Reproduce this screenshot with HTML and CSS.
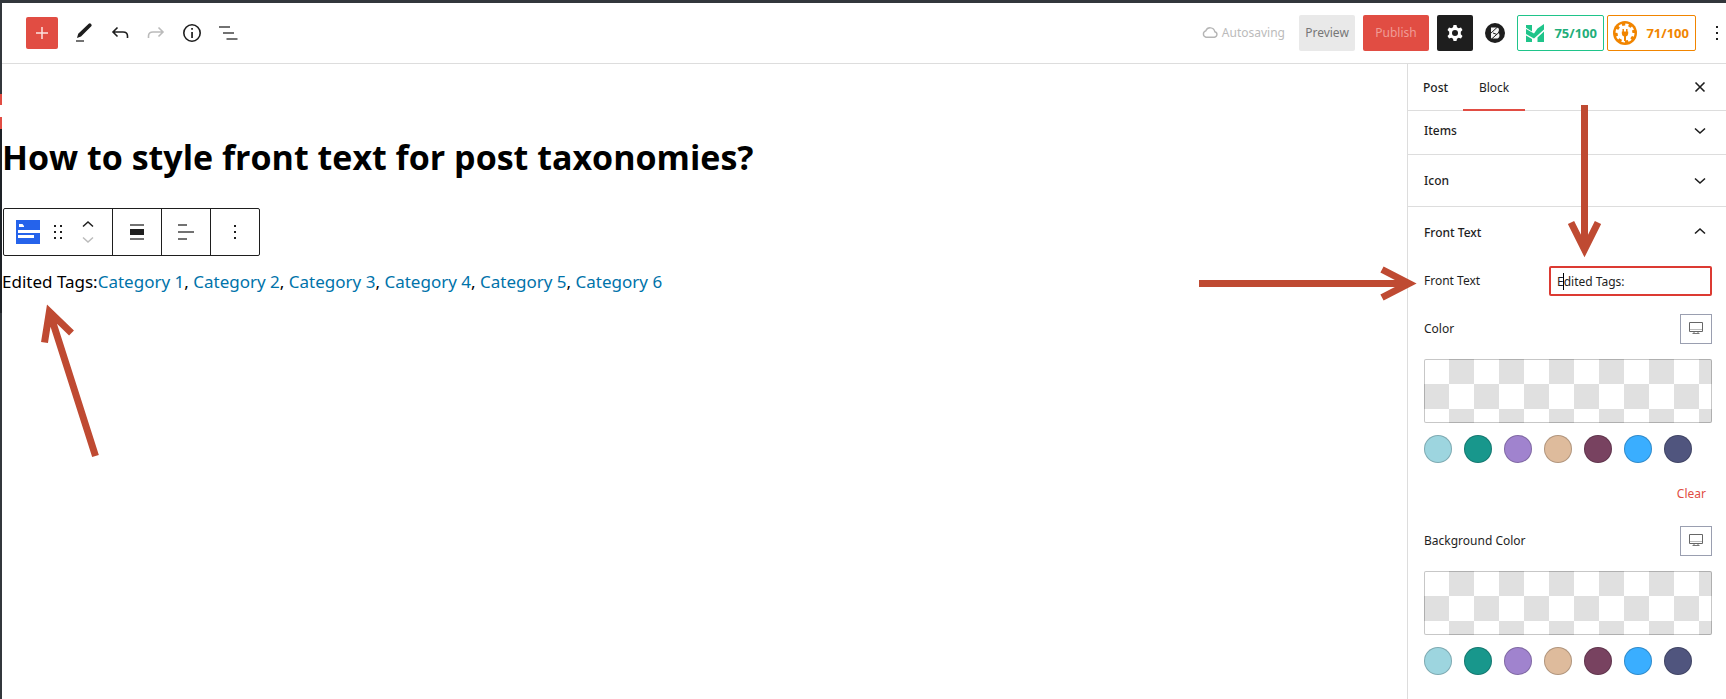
FILE: index.html
```html
<!DOCTYPE html>
<html lang="en">
<head>
<meta charset="utf-8">
<title>Edit Post</title>
<link rel="stylesheet" href="styles.css">
</head>
<body>
<div class="admin-rail"><span class="rail-marker"></span><span class="rail-dark"></span></div>
<div class="app">
  <header class="topbar">
    <div class="tools">
      <button class="add-btn" aria-label="Add block"><svg width="24" height="24" viewBox="0 0 24 24"><path d="M12 6v12M6 12h12" stroke="#fbe3e1" stroke-width="1.5"/></svg></button>
      <button class="icon-btn" aria-label="Tools"><svg width="24" height="24" viewBox="0 0 24 24"><path d="M5 17l1.200-4.300L16.700 2.700q1.200-1 2.400.2t.2 2.400L9 15.500z" fill="#1e1e1e"/><path d="M4 20h8" stroke="#444" stroke-width="1.500"/></svg></button>
      <button class="icon-btn" aria-label="Undo"><svg width="24" height="24" viewBox="0 0 24 24" fill="none" stroke="#1e1e1e" stroke-width="1.600"><path d="M9.500 6.500L5 11 9.500 15.500M5.500 11H15q4.500 0 4.500 4v2"/></svg></button>
      <button class="icon-btn" aria-label="Redo" disabled><svg width="24" height="24" viewBox="0 0 24 24" fill="none" stroke="#bbb" stroke-width="1.600"><path d="M14.500 6.500L19 11l-4.500 4.500M18.500 11H9q-4.500 0-4.500 4v2"/></svg></button>
      <button class="icon-btn" aria-label="Details"><svg width="24" height="24" viewBox="0 0 24 24"><circle cx="12" cy="12" r="8.200" fill="none" stroke="#1e1e1e" stroke-width="1.600"/><path d="M11.200 7h1.700v1.800h-1.700zM11.200 11h1.700v6h-1.700z" fill="#1e1e1e"/></svg></button>
      <button class="icon-btn" aria-label="List view"><svg width="24" height="24" viewBox="0 0 24 24"><path d="M3 6h11M7 12h11M10.500 18h11" stroke="#444" stroke-width="1.600"/></svg></button>
    </div>
    <div class="actions">
      <span class="saving"><svg width="16" height="24" viewBox="0 0 16 24"><path d="M4 16.200h8.500a2.800 2.800 0 0 0 .3-5.500 4.700 4.700 0 0 0-9-.9A3.300 3.300 0 0 0 4 16.200z" fill="none" stroke="#b5b5b5" stroke-width="1.400"/></svg>Autosaving</span>
      <button class="btn preview">Preview</button>
      <button class="btn publish">Publish</button>
      <button class="gear" aria-label="Settings"><svg width="24" height="24" viewBox="0 0 24 24"><path d="M10.500 4h3l.5 2.300 1.700 1 2.300-.8 1.500 2.600-1.700 1.600v2.600l1.700 1.600-1.500 2.600-2.300-.8-1.700 1-.5 2.300h-3L10 17.700l-1.700-1-2.300.8-1.500-2.600 1.700-1.600v-2.600L4.500 9.100 6 6.500l2.300.8 1.700-1z" fill="#fff"/><circle cx="12" cy="12" r="3" fill="#1e1e1e"/></svg></button>
      <button class="icon-btn blocks" aria-label="Blocks"><svg width="20" height="20" viewBox="0 0 20 20"><circle cx="10" cy="10" r="10" fill="#1e1e1e"/><path d="M6 4.500h5.500q2.500 0 2.500 2.300 0 1.700-1.200 2.700 1.700.8 1.700 2.900 0 3.100-3.500 3.100H6z" fill="#f4f4f4"/><path d="M5 11L12.500 4M6 16.500L15 8.500M8 10l4 1.500" stroke="#1e1e1e" stroke-width="1"/></svg></button>
      <div class="scores">
        <button class="score green"><svg width="24" height="24" viewBox="0 0 24 24" fill="#1fc48a"><path d="M3 4h6v6.500L3 6.800zM14.500 7.500L21 3v5.500l-10 9L3 13V8l8 4.500z"/><path d="M3 14.500l6 3.500v3H3zM14.500 16.500L21 10.500V21h-6.500z"/></svg><span>75/100</span></button>
        <button class="score orange"><svg width="24" height="24" viewBox="0 0 24 24"><circle cx="12" cy="12" r="12" fill="#f18500"/><circle cx="12" cy="12" r="7.500" fill="#fff"/><circle cx="12" cy="12" r="8" fill="none" stroke="#fff" stroke-width="3" stroke-dasharray="3.200 3.083"/><path d="M10.200 8v3M13.800 8v3" stroke="#f18500" stroke-width="1.500"/><path d="M8.800 10.500h6.400v2q0 2.400-2.200 3V20h-2v-4.500q-2.200-.6-2.200-3z" fill="#f18500"/></svg><span>71/100</span></button>
      </div>
      <button class="more" aria-label="Options"><svg width="4" height="24" viewBox="0 0 4 24" fill="#1e1e1e"><path d="M1 5h2v2H1zM1 11h2v2H1zM1 17h2v2H1z"/></svg></button>
    </div>
  </header>
  <div class="body">
    <main class="editor">
      <h1>How to style front text for post taxonomies?</h1>
      <div class="toolbar" role="toolbar" aria-label="Block tools">
        <div class="group first">
          <button aria-label="Post taxonomies"><svg width="24" height="24" viewBox="0 0 24 24"><path d="M0 0h24v24H0z" fill="#2563eb"/><path d="M2 10h22v3H2zM2 15h16v3H2zM3 4h3.500L8 6v1H3z" fill="#fff"/></svg></button>
          <button aria-label="Drag"><svg width="24" height="24" viewBox="0 0 24 24" fill="#1e1e1e"><path d="M8 5h2v2H8zM14 5h2v2h-2zM8 11h2v2H8zM14 11h2v2h-2zM8 17h2v2H8zM14 17h2v2h-2z"/></svg></button>
          <div class="movers">
            <button aria-label="Move up"><svg width="12" height="8" viewBox="0 0 12 8"><path d="M1 6.500l5-4.500 5 4.500" fill="none" stroke="#1e1e1e" stroke-width="1.500"/></svg></button>
            <button aria-label="Move down" disabled><svg width="12" height="8" viewBox="0 0 12 8"><path d="M1 1.500L6 6l5-4.500" fill="none" stroke="#bbb" stroke-width="1.500"/></svg></button>
          </div>
        </div>
        <div class="group"><button aria-label="Align"><svg width="24" height="24" viewBox="0 0 24 24"><path d="M5 5h14M5 19h14" stroke="#444" stroke-width="1.600"/><path d="M5 9h14v6H5z" fill="#1e1e1e"/></svg></button></div>
        <div class="group"><button aria-label="Align text"><svg width="24" height="24" viewBox="0 0 24 24"><path d="M4 5h9M4 12h16M4 19h9" stroke="#444" stroke-width="1.600"/></svg></button></div>
        <div class="group"><button aria-label="Options"><svg width="24" height="24" viewBox="0 0 24 24" fill="#1e1e1e"><path d="M11 5h2v2h-2zM11 11h2v2h-2zM11 17h2v2h-2z"/></svg></button></div>
      </div>
      <p class="terms">Edited Tags:<a href="#">Category 1</a>, <a href="#">Category 2</a>, <a href="#">Category 3</a>, <a href="#">Category 4</a>, <a href="#">Category 5</a>, <a href="#">Category 6</a></p>
      <svg class="arrow arrow-terms" width="70" height="160" viewBox="0 0 70 160"><path d="M9.400 9.600L55.500 154M4.500 40.500l4.900-30.900L31.500 31"/></svg>
    </main>
    <aside class="sidebar">
      <div class="tabs">
        <button class="tab strong">Post</button>
        <button class="tab active">Block</button>
        <button class="close" aria-label="Close settings"><svg width="12" height="12" viewBox="0 0 12 12"><path d="M1.500 1.500l9 9M10.500 1.500l-9 9" stroke="#1e1e1e" stroke-width="1.600"/></svg></button>
      </div>
      <button class="panel-title short">Items<svg width="12" height="8" viewBox="0 0 12 8"><path d="M1 1.500L6 6l5-4.500"/></svg></button>
      <button class="panel-title">Icon<svg width="12" height="8" viewBox="0 0 12 8"><path d="M1 1.500L6 6l5-4.500"/></svg></button>
      <section class="panel">
        <button class="panel-title open">Front Text<svg width="12" height="12" viewBox="0 0 12 12"><path d="M1 6.500L6 2l5 4.500"/></svg></button>
        <div class="row">
          <label for="front-text">Front Text</label>
          <div class="field"><input id="front-text" type="text" value="Edited Tags:"><span class="caret"></span></div>
        </div>
        <div class="row color-row">
          <span>Color</span>
          <button class="device" aria-label="Desktop"><svg width="14" height="14" viewBox="0 0 14 14"><path d="M.5 1.500h13v9H.5z" fill="#fff" stroke="#666"/><path d="M1 8.500h12" stroke="#bbb"/><path d="M5 11v2M9 11v2M3.500 12.500h7" stroke="#777"/></svg></button>
        </div>
        <div class="checker"></div>
        <div class="swatches"><button class="c1" aria-label="Aqua"></button><button class="c2" aria-label="Teal"></button><button class="c3" aria-label="Purple"></button><button class="c4" aria-label="Sand"></button><button class="c5" aria-label="Plum"></button><button class="c6" aria-label="Blue"></button><button class="c7" aria-label="Indigo"></button></div>
        <button class="clear">Clear</button>
        <div class="row color-row second">
          <span>Background Color</span>
          <button class="device" aria-label="Desktop"><svg width="14" height="14" viewBox="0 0 14 14"><path d="M.5 1.500h13v9H.5z" fill="#fff" stroke="#666"/><path d="M1 8.500h12" stroke="#bbb"/><path d="M5 11v2M9 11v2M3.500 12.500h7" stroke="#777"/></svg></button>
        </div>
        <div class="checker"></div>
        <div class="swatches"><button class="c1" aria-label="Aqua"></button><button class="c2" aria-label="Teal"></button><button class="c3" aria-label="Purple"></button><button class="c4" aria-label="Sand"></button><button class="c5" aria-label="Plum"></button><button class="c6" aria-label="Blue"></button><button class="c7" aria-label="Indigo"></button></div>
      </section>
      <svg class="arrow arrow-label" width="230" height="48" viewBox="0 0 230 48"><path d="M6 23.500h206M189 9.500l27 14-27 14"/></svg>
      <svg class="arrow arrow-input" width="48" height="164" viewBox="0 0 48 164"><path d="M24.500 5v140M11 122.500l13.500 27 13.500-27"/></svg>
    </aside>
  </div>
</div>
</body>
</html>
```
FILE: styles.css
```css
* { box-sizing: border-box; }
body {
  margin: 0;
  min-height: 100vh;
  display: flex;
  border-top: 3px solid #32373c;
  background: #fff;
  color: #1e1e1e;
  font: 12px/20px "Noto Sans", "Open Sans", sans-serif;
  overflow: hidden;
}
button {
  display: flex;
  align-items: center;
  justify-content: center;
  margin: 0;
  padding: 0;
  border: 0;
  background: none;
  color: inherit;
  font: inherit;
}
svg { display: block; flex: none; }

.admin-rail { width: 2px; flex: none; padding-top: 91px; background: #32373c; }
.rail-marker { display: block; height: 35px; border: solid #e14d43; border-width: 11px 0 12px; background: #fff; }
.rail-dark { display: block; height: 184px; background: #1d2126; }

.app { flex: 1; min-width: 0; display: flex; flex-direction: column; }
.topbar {
  display: flex;
  justify-content: space-between;
  align-items: center;
  height: 61px;
  padding: 0 7px 0 24px;
  border-bottom: 1px solid #ddd;
}
.tools { display: flex; align-items: center; gap: 12px; }
.add-btn { width: 32px; height: 32px; border-radius: 2px; background: #e14d43; margin-right: 2px; }
.actions { display: flex; align-items: center; gap: 8px; }
.saving { display: flex; align-items: center; gap: 4px; margin-right: 6px; color: #bbb; }
.btn { height: 36px; border-radius: 2px; }
.preview { width: 56px; background: #e9e9e9; color: #777; }
.publish { width: 66px; background: #e14d43; color: #f09c96; }
.gear { width: 36px; height: 36px; border-radius: 2px; background: #1e1e1e; }
.blocks { margin: 0 4px; }
.scores { display: flex; gap: 3px; }
.score {
  justify-content: space-between;
  height: 36px;
  padding: 0 6px 0 5px;
  border: 1px solid;
  border-radius: 2px;
  font-size: 13px;
  font-weight: 700;
}
.green { width: 87px; color: #1fc48a; }
.green span { color: #1fae7a; }
.orange { width: 89px; color: #f18500; }
.more { margin-left: 11px; }

.body { flex: 1; display: flex; }
.editor { position: relative; flex: 1; min-width: 0; padding-top: 68px; color: #000; }
h1 { margin: 0 0 26px; font: 700 34px/50px "Open Sans", "Noto Sans", sans-serif; }
.toolbar {
  display: flex;
  width: max-content;
  height: 48px;
  margin-left: 1px;
  border: 1px solid #1e1e1e;
  border-radius: 2px;
}
.group { display: flex; align-items: center; justify-content: center; width: 49px; }
.group + .group { border-left: 1px solid #1e1e1e; }
.first { width: 108px; gap: 6px; padding-right: 6px; }
.movers { display: flex; flex-direction: column; gap: 8px; margin-left: 6px; }
.terms { margin: 12px 0 0; font-size: 17px; line-height: 28px; }
.terms a { color: #0073aa; text-decoration: none; }

.sidebar { position: relative; flex: none; width: 319px; border-left: 1px solid #ddd; }
.tabs { display: flex; height: 47px; padding-right: 20px; border-bottom: 1px solid #ddd; }
.tab { height: 47px; padding: 0 15px; border-bottom: 2px solid transparent; border-top: 2px solid transparent; }
.strong, .panel-title { font-weight: 500; }
.active { width: 62px; border-bottom-color: #e14d43; }
.close { margin-left: auto; }
.panel-title {
  justify-content: space-between;
  width: 100%;
  height: 52px;
  padding: 0 20px 0 16px;
  border-bottom: 1px solid #ddd;
}
.panel-title svg { fill: none; stroke: #1e1e1e; stroke-width: 1.6; }
.short { height: 44px; padding-bottom: 4px; }
.open { padding: 0 6px 0 0; border: 0; }
.panel { padding: 0 14px 0 16px; }
.row { display: flex; align-items: center; justify-content: space-between; height: 30px; margin-top: 7px; }
.field { position: relative; width: 163px; }
.field input {
  display: block;
  width: 100%;
  height: 30px;
  padding: 1px 6px 0;
  border: 2px solid #dc3a32;
  border-radius: 2px;
  background: #fff;
  color: #1e1e1e;
  font: inherit;
}
.caret { position: absolute; left: 14px; top: 7px; width: 1px; height: 17px; background: #000; }
.color-row { margin-top: 18px; }
.second { margin-top: 22px; }
.device { width: 32px; height: 30px; border: 1px solid #9a9fb0; padding-bottom: 2px; }
.checker {
  height: 64px;
  margin-top: 15px;
  border: 1px solid rgba(0, 0, 0, 0.22);
  border-radius: 2px;
  background: repeating-conic-gradient(#e0e0e0 0 25%, #fff 0 50%) 0 0 / 50px 50px border-box;
}
.swatches { display: flex; gap: 12px; margin-top: 12px; }
.swatches button { width: 28px; height: 28px; border: 1px solid rgba(0, 0, 0, 0.2); border-radius: 50%; }
.c1 { background: #9dd5df; }
.c2 { background: #18978c; }
.c3 { background: #a083ce; }
.c4 { background: #debb9c; }
.c5 { background: #784260; }
.c6 { background: #3aaeff; }
.c7 { background: #50557e; }
.clear { margin: 21px 6px 0 auto; color: #e14d43; }

.arrow { position: absolute; fill: none; stroke: #bf4a32; stroke-width: 7; stroke-miterlimit: 10; pointer-events: none; }
.arrow-terms { left: 38px; top: 238px; }
.arrow-label { right: 303px; top: 196px; }
.arrow-input { right: 118px; top: 36px; }
```
